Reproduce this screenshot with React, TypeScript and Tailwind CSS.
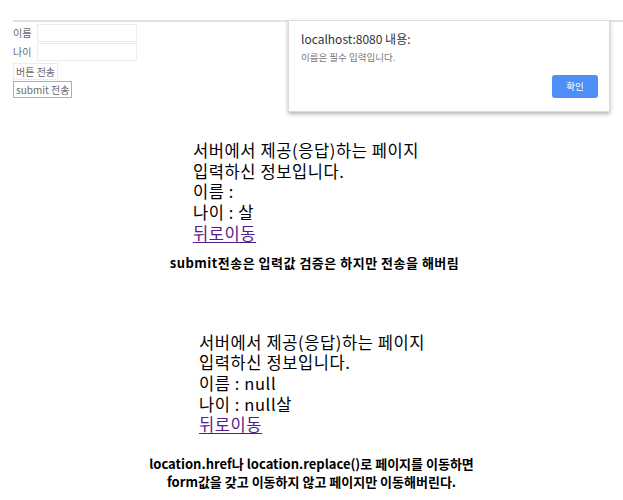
import React from "react";

const font = { fontFamily: '"Noto Sans CJK KR", "Noto Sans", sans-serif' };

// 결과 페이지 블록 (서버 응답 화면)
const ResultBlock: React.FC<{ name: string; age: string; className?: string }> = ({ name, age, className }) => (
  <div className={`text-[16.5px] leading-[20.7px] tracking-[0.6px] text-black ${className ?? ""}`}>
    <p>서버에서 제공(응답)하는 페이지</p>
    <p>입력하신 정보입니다.</p>
    <p>이름 : {name}</p>
    <p>나이 : {age}살</p>
    <a href="#" className="text-[#551a8b] underline underline-offset-2">
      뒤로이동
    </a>
  </div>
);

export default function App() {
  return (
    <div className="w-[623px] h-[500px] bg-white overflow-hidden" style={font}>
      {/* 캡처된 폼 + alert 창 */}
      <div className="relative h-[120px] pt-[20px] pl-[13px]">
        <div className="border-t-[2px] border-[#e2e2e2] pt-[1px]">
          <div className="flex flex-col text-[10px] leading-[14px] text-[#6a6a6a]">
            <div className="flex items-center h-[19px]">
              <span className="w-[24px]">이름</span>
              <div className="w-[100px] h-[18px] border border-[#ececec]" />
            </div>
            <div className="flex items-center h-[19px]">
              <span className="w-[24px]">나이</span>
              <div className="w-[100px] h-[18px] border border-[#ececec]" />
            </div>
            <div className="flex mt-[2px]">
              <span className="h-[17px] px-[2px] border border-[#ececec] flex items-center">버튼 전송</span>
            </div>
            <div className="flex mt-[1px]">
              <span className="h-[17px] px-[2px] border border-[#8fb3ea] flex items-center">submit 전송</span>
            </div>
          </div>
        </div>

        <div className="absolute left-[288px] top-[20px] w-[322px] h-[92px] bg-white border border-[#dcdcdc] shadow-[0_2px_4px_rgba(0,0,0,0.3)] px-[12px] pt-[10px]">
          <p className="text-[12px] leading-[16px] text-[#333]">localhost:8080 내용:</p>
          <p className="mt-[4px] text-[9.5px] leading-[13px] text-[#777]">이름은 필수 입력입니다.</p>
          <div className="flex justify-end mt-[11px]">
            <button className="w-[46px] h-[23px] rounded-[3px] bg-[#4d8ff5] text-white text-[9.5px] mr-[-1px]">
              확인
            </button>
          </div>
        </div>
      </div>

      <ResultBlock name="" age="" className="ml-[193px] mt-[20px]" />

      <p className="mt-[11px] text-center text-[13px] leading-[16px] tracking-[0.5px] font-bold text-black pl-[6px]">
        submit전송은 입력값 검증은 하지만 전송을 해버림
      </p>

      <ResultBlock name="null" age="null" className="ml-[199px] mt-[61px]" />

      <div className="mt-[20px] text-center text-[13px] leading-[18px] font-bold text-black">
        <p>location.href나 location.replace()로 페이지를 이동하면</p>
        <p>form값을 갖고 이동하지 않고 페이지만 이동해버린다.</p>
      </div>
    </div>
  );
}
